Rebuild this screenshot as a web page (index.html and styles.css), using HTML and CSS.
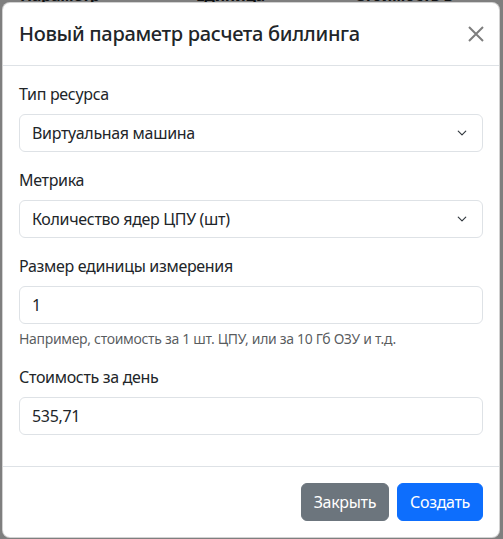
FILE: index.html
```html
<!DOCTYPE html>
<html lang="ru">
<head>
<meta charset="utf-8">
<title>Новый параметр расчета биллинга</title>
<link rel="stylesheet" href="styles.css">
</head>
<body>
<div class="page">
  <div class="table-head">
    <span class="th th-name">Параметр</span>
    <span class="th th-unit">Единица</span>
    <span class="th th-cost">Стоимость в день</span>
  </div>
</div>
<div class="backdrop"></div>
<div class="modal">
  <div class="modal-header">
    <h5 class="modal-title">Новый параметр расчета биллинга</h5>
    <button class="btn-close" type="button" aria-label="Закрыть">
      <svg viewBox="0 0 16 16" width="16" height="16"><path d="M1 1L15 15M15 1L1 15" stroke="#000" stroke-width="2"/></svg>
    </button>
  </div>
  <div class="modal-body">
    <div class="field">
      <label class="form-label">Тип ресурса</label>
      <div class="form-select"><span>Виртуальная машина</span><svg class="chev" viewBox="0 0 16 16" width="16" height="12"><path d="M3 5.5l5 5 5-5" fill="none" stroke="#343a40" stroke-width="1.6" stroke-linecap="round" stroke-linejoin="round"/></svg></div>
    </div>
    <div class="field">
      <label class="form-label">Метрика</label>
      <div class="form-select"><span>Количество ядер ЦПУ (шт)</span><svg class="chev" viewBox="0 0 16 16" width="16" height="12"><path d="M3 5.5l5 5 5-5" fill="none" stroke="#343a40" stroke-width="1.6" stroke-linecap="round" stroke-linejoin="round"/></svg></div>
    </div>
    <div class="field">
      <label class="form-label">Размер единицы измерения</label>
      <div class="form-control">1</div>
      <div class="form-text">Например, стоимость за 1 шт. ЦПУ, или за 10 Гб ОЗУ и т.д.</div>
    </div>
    <div class="field field-last">
      <label class="form-label">Стоимость за день</label>
      <div class="form-control">535,71</div>
    </div>
  </div>
  <div class="modal-footer">
    <button class="btn btn-secondary" type="button">Закрыть</button>
    <button class="btn btn-primary" type="button">Создать</button>
  </div>
</div>
</body>
</html>
```
FILE: styles.css
```css
* { box-sizing: border-box; }
html, body { margin: 0; padding: 0; }
body {
  font-family: "Noto Sans", "Open Sans", sans-serif;
  font-size: 16px;
  line-height: 1.5;
  letter-spacing: -0.02em;
  color: #212529;
  background: #fff;
  width: 503px;
  height: 539px;
  overflow: hidden;
  position: relative;
}
.page { padding: 0 20px; }
.table-head {
  display: flex;
  margin-top: -17px;
  font-weight: 700;
  font-size: 16px;
  line-height: 24px;
}
.th-name { width: 192px; }
.th-unit { width: 173px; }
.backdrop {
  position: absolute;
  inset: 0;
  background: rgba(0, 0, 0, 0.5);
}
.modal {
  position: absolute;
  left: 2px;
  top: 2px;
  width: 498px;
  background: #fff;
  border: 1px solid rgba(0, 0, 0, 0.175);
  border-radius: 8px;
  display: flex;
  flex-direction: column;
}
.modal-header {
  display: flex;
  align-items: center;
  justify-content: space-between;
  padding: 16px;
  border-bottom: 1px solid #dee2e6;
}
.modal-title {
  margin: 0;
  font-size: 20px;
  font-weight: 500;
  line-height: 30px;
}
.btn-close {
  border: 0;
  background: transparent;
  padding: 4px;
  margin: -8px -5px -8px auto;
  width: 24px;
  height: 24px;
  opacity: 0.5;
  display: flex;
  align-items: center;
  justify-content: center;
}
.btn-close svg { display: block; }
.modal-body {
  padding: 16px;
}
.field { margin-bottom: 16px; }
.field-last { margin-bottom: 15px; }
.form-label {
  display: block;
  margin-bottom: 8px;
}
.form-select, .form-control {
  height: 38px;
  border: 1px solid #dee2e6;
  border-radius: 6px;
  padding: 6px 12px;
  line-height: 24px;
  display: flex;
  align-items: center;
  justify-content: space-between;
}
.chev { display: block; }
.form-text {
  margin-top: 4px;
  font-size: 14px;
  line-height: 21px;
  color: rgba(33, 37, 41, 0.75);
}
.modal-footer {
  display: flex;
  justify-content: flex-end;
  align-items: center;
  padding: 12px;
  border-top: 1px solid #dee2e6;
}
.btn {
  font-family: inherit;
  font-size: 16px;
  line-height: 24px;
  letter-spacing: -0.02em;
  padding: 6px 12px;
  margin: 4px;
  border: 1px solid transparent;
  border-radius: 6px;
  color: #fff;
}
.btn-secondary { background: #6c757d; border-color: #6c757d; }
.btn-primary { background: #0d6efd; border-color: #0d6efd; }
```
